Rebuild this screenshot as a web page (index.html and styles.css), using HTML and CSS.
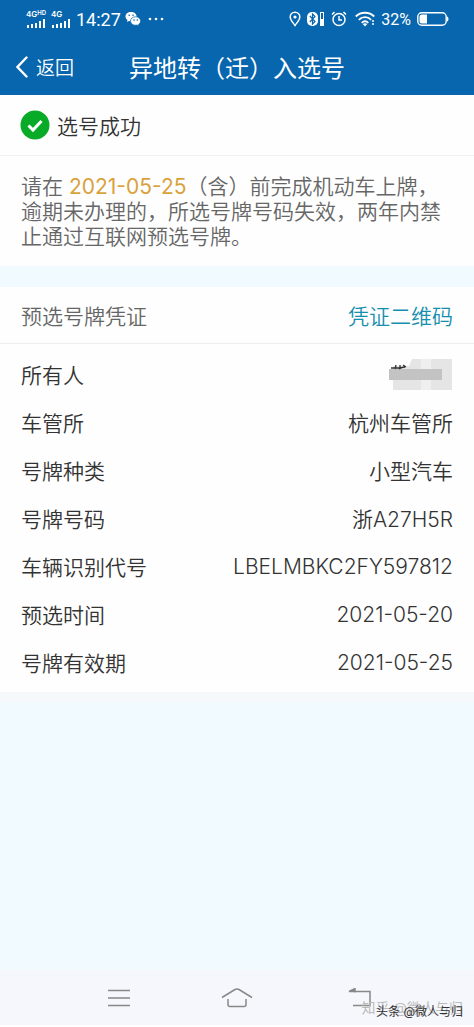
FILE: index.html
```html
<!DOCTYPE html>
<html lang="zh-CN">
<head>
    <meta charset="UTF-8">
    <meta name="viewport" content="width=device-width, initial-scale=1.0">
    <title>异地转（迁）入选号</title>
    <link rel="stylesheet" href="styles.css">
</head>
<body>

    <!-- Header -->
    <header class="header">
        <div class="status-bar">
            <div class="status-left">
                <div class="signal">
                    <span class="network">4G<sup>HD</sup></span>
                    <svg width="20" height="9" viewBox="0 0 20 9" fill="currentColor"><path d="M1 6h2v3H1zM5 5h2v4H5zM9 4h2v5H9zM13 2h2v7h-2zM17 0h2v9h-2z"/></svg>
                </div>
                <div class="signal">
                    <span class="network">4G</span>
                    <svg width="20" height="9" viewBox="0 0 20 9" fill="currentColor"><path d="M1 6h2v3H1zM5 5h2v4H5zM9 4h2v5H9zM13 2h2v7h-2zM17 0h2v9h-2z"/></svg>
                </div>
                <span class="time">14:27</span>
                <svg width="16" height="16" viewBox="0 0 16 16">
                    <path fill="#fff" d="M6 1C2.700 1 .5 3 .5 5.600c0 1.500.8 2.700 2 3.600L2 11l2-1 2 .3c3.300 0 5.600-2 5.600-4.700S9.300 1 6 1z"/>
                    <path fill="#fff" stroke="#0766ad" stroke-width=".7" d="M10.500 5.800c-2.900 0-5 1.800-5 4.200s2.100 4.200 5 4.200l1.600-.2 2 1-.5-1.700c1.200-.8 2-1.900 2-3.300 0-2.400-2.200-4.200-5.100-4.200z"/>
                    <g fill="#0766ad"><circle cx="4.200" cy="4.300" r=".8"/><circle cx="8" cy="4.300" r=".8"/><circle cx="9" cy="9" r=".8"/><circle cx="12.300" cy="9" r=".8"/></g>
                </svg>
                <svg class="dots" width="16" height="4" viewBox="0 0 16 4" fill="currentColor"><circle cx="2" cy="2" r="1.300"/><circle cx="8" cy="2" r="1.300"/><circle cx="14" cy="2" r="1.300"/></svg>
            </div>
            <div class="status-right">
                <svg width="12" height="16" viewBox="0 0 12 16" fill="none" stroke="currentColor" stroke-width="1.500"><path d="M6 14.500C4 11.500 1.200 9 1.200 6a4.800 4.800 0 0 1 9.600 0c0 3-2.800 5.500-4.800 8.500z"/><circle cx="6" cy="6" r="1.600" fill="currentColor" stroke="none"/></svg>
                <svg width="18" height="16" viewBox="0 0 18 16" fill="none" stroke="currentColor"><rect x="0" y="1" width="11" height="14" rx="5" fill="currentColor" stroke="none"/><path stroke="#0766ad" stroke-width="1.200" d="M2.800 5l5.200 5.500-2.500 2.500V3L8 5.500 2.800 11"/><rect x="13.500" y="1.500" width="3" height="13"/><path stroke-width="2" d="M15 8v6"/></svg>
                <svg width="16" height="16" viewBox="0 0 16 16" fill="none" stroke="currentColor" stroke-width="1.500"><circle cx="8" cy="8.500" r="6"/><path d="M8 5v4h3M1 3.500L3.500 1M15 3.500L12.500 1"/></svg>
                <svg class="wifi" width="20" height="16" viewBox="0 0 20 16" fill="none" stroke="currentColor" stroke-width="1.800"><path d="M.8 5.500c5-5 13.400-5 18.400 0M3.800 8.800c3.500-3.500 8.900-3.500 12.400 0M6.700 11.800c2-2 4.600-2 6.600 0"/><path fill="currentColor" stroke="none" d="M7.800 13L10 15.500l2.200-2.500c-1.200-1-3.200-1-4.400 0z"/><path stroke-width="1.500" stroke-dasharray="2 1" d="M18 9v6"/></svg>
                <span class="battery-text">32%</span>
                <svg width="32" height="14" viewBox="0 0 32 14"><rect x=".8" y=".8" width="28.400" height="12.400" rx="4" fill="none" stroke="#fff" stroke-width="1.400"/><path fill="#fff" d="M10 2.500v9H5a2.500 2.500 0 0 1-2.500-2.500V5A2.500 2.500 0 0 1 5 2.500zM30 4.500c2 .5 2 4.500 0 5z"/></svg>
            </div>
        </div>
        <nav class="nav-bar">
            <button class="back" type="button">
                <svg width="12" height="22" viewBox="0 0 12 22" fill="none" stroke="currentColor" stroke-width="2.400" stroke-linecap="round"><path d="M10.500 1.500L1.500 11l9 9.500"/></svg>
                返回
            </button>
            <h1 class="title">异地转（迁）入选号</h1>
        </nav>
    </header>

    <main class="content">
        <!-- Result -->
        <section class="card">
            <h2 class="result">
                <svg width="30" height="30" viewBox="0 0 30 30"><circle cx="15" cy="15" r="14.500" fill="#08ab28"/><path d="M8.500 15.500l4.500 4.500 8.500-9" fill="none" stroke="#fff" stroke-width="3"/></svg>
                选号成功
            </h2>
            <p class="notice">请在 <span class="date">2021-05-25</span>（含）前完成机动车上牌，逾期未办理的，所选号牌号码失效，两年内禁止通过互联网预选号牌。</p>
        </section>

        <!-- Plate voucher -->
        <section class="card">
            <div class="card-header">
                <h2 class="card-title">预选号牌凭证</h2>
                <a class="qr-link" href="#">凭证二维码</a>
            </div>
            <dl class="details">
                <div class="row">
                    <dt>所有人</dt>
                    <dd>
                        <svg width="64" height="32" viewBox="0 0 64 32">
                            <path fill="#e5e5e5" d="M4 8h16l3-7h40v31H4z"/>
                            <path fill="#efefef" d="M32 1h10v31H32z"/>
                            <path fill="#c3c3c3" d="M0 11h53v11H0z"/>
                            <path stroke="#333" stroke-width="1.300" fill="none" d="M2 10h8l6-1M7 7l-1 4M11 7v4M14 7l3 2M10 11l5-2"/>
                        </svg>
                    </dd>
                </div>
                <div class="row"><dt>车管所</dt><dd>杭州车管所</dd></div>
                <div class="row"><dt>号牌种类</dt><dd>小型汽车</dd></div>
                <div class="row"><dt>号牌号码</dt><dd>浙A27H5R</dd></div>
                <div class="row"><dt>车辆识别代号</dt><dd>LBELMBKC2FY597812</dd></div>
                <div class="row"><dt>预选时间</dt><dd>2021-05-20</dd></div>
                <div class="row"><dt>号牌有效期</dt><dd>2021-05-25</dd></div>
            </dl>
        </section>
    </main>

    <!-- System keys -->
    <footer class="system-bar">
        <button type="button" aria-label="菜单"><svg width="32" height="20" viewBox="0 0 32 20"><path d="M5 2.500h22M5 10h22M5 17.500h22"/></svg></button>
        <button type="button" aria-label="主页"><svg width="32" height="20" viewBox="0 0 32 20"><path d="M1 9.500L14 1.500q2-1 4 0l13 8M7 11v5.500q0 2 2 2h14q2 0 2-2V11"/></svg></button>
        <button type="button" aria-label="返回"><svg width="32" height="20" viewBox="0 0 32 20"><path d="M15 3.500h16v14H14"/><path d="M10 3.500L16 .5v3z" fill="#888"/></svg></button>
        <span class="watermark watermark-light">知乎 @微人与归</span>
        <span class="watermark">头条 @微人与归</span>
    </footer>

</body>
</html>
```
FILE: styles.css
```css
/* General Styling */
* {
    box-sizing: border-box;
}

body {
    font-family: Inter, "Noto Sans CJK SC", sans-serif;
    font-size: 21px;
    font-weight: 350;
    margin: 0;
    min-height: 100vh;
    display: flex;
    flex-direction: column;
    background: #f1faff;
    color: #333;
}

svg {
    display: block;
    flex: none;
}

h1, h2, p, dl, dd {
    margin: 0;
    font-weight: inherit;
}

button {
    padding: 0;
    border: none;
    background: none;
    color: inherit;
    font: inherit;
    cursor: pointer;
}

/* Header */
.header {
    background: #0766ad;
    color: #fff;
}

.status-bar {
    display: flex;
    justify-content: space-between;
    height: 38px;
    padding: 0 25px 0 26px;
}

.status-left,
.status-right {
    display: flex;
    align-items: center;
}

.status-left {
    gap: 4px;
}

.status-right {
    gap: 6px;
}

.signal {
    display: flex;
    flex-direction: column;
    gap: 1px;
    width: 21px;
}

.network {
    font-size: 8px;
    line-height: 8px;
    font-weight: 600;
    white-space: nowrap;
}

.network sup {
    font-size: 6px;
    line-height: 6px;
    vertical-align: top;
}

.time {
    font-family: Roboto, sans-serif;
    font-size: 18px;
    font-weight: 400;
}

.dots {
    margin-left: 3px;
}

.wifi {
    margin-left: 2px;
}

.battery-text {
    font-family: Roboto, sans-serif;
    font-size: 16px;
    font-weight: 400;
}

.nav-bar {
    display: grid;
    grid-template-columns: 1fr auto 1fr;
    align-items: center;
    height: 57px;
    padding: 0 16px;
}

.back {
    display: flex;
    align-items: center;
    justify-self: start;
    gap: 8px;
    font-size: 19px;
}

.title {
    font-size: 24px;
    font-weight: 400;
}

/* Cards */
.content {
    flex: 1;
}

.card {
    margin-bottom: 21px;
    background: #fefefe;
}

.result {
    display: flex;
    align-items: center;
    gap: 7px;
    height: 61px;
    padding: 0 20px;
    border-bottom: 1px solid #f1f1f1;
    font-size: 21px;
}

.notice {
    padding: 18px 21px 17px;
    line-height: 25px;
    color: #666;
}

.date {
    font-weight: 400;
    color: #d9a23c;
}

.card-header {
    display: flex;
    justify-content: space-between;
    align-items: center;
    height: 57px;
    padding: 0 21px;
    border-bottom: 1px solid #eaeef0;
}

.card-title {
    font-size: 21px;
    color: #666;
}

.qr-link {
    color: #168fae;
    text-decoration: none;
}

.details {
    padding: 6px 21px;
    border-bottom: 10px solid #f7f8fb;
}

.row {
    display: flex;
    justify-content: space-between;
    align-items: center;
    height: 48px;
}

/* System keys */
.system-bar {
    position: relative;
    display: flex;
    justify-content: space-around;
    align-items: center;
    height: 57px;
    padding: 0 60px;
    background: #f6f7fd;
    border-bottom: 2px solid #fff;
}

.system-bar svg {
    fill: none;
    stroke: #888;
    stroke-width: 1.5;
}

.watermark {
    position: absolute;
    right: 11px;
    bottom: 4px;
    font-size: 12px;
    line-height: 18px;
    font-weight: 400;
    color: #333;
}

.watermark-light {
    bottom: 8px;
    font-size: 14px;
    color: #bbb;
}
```
